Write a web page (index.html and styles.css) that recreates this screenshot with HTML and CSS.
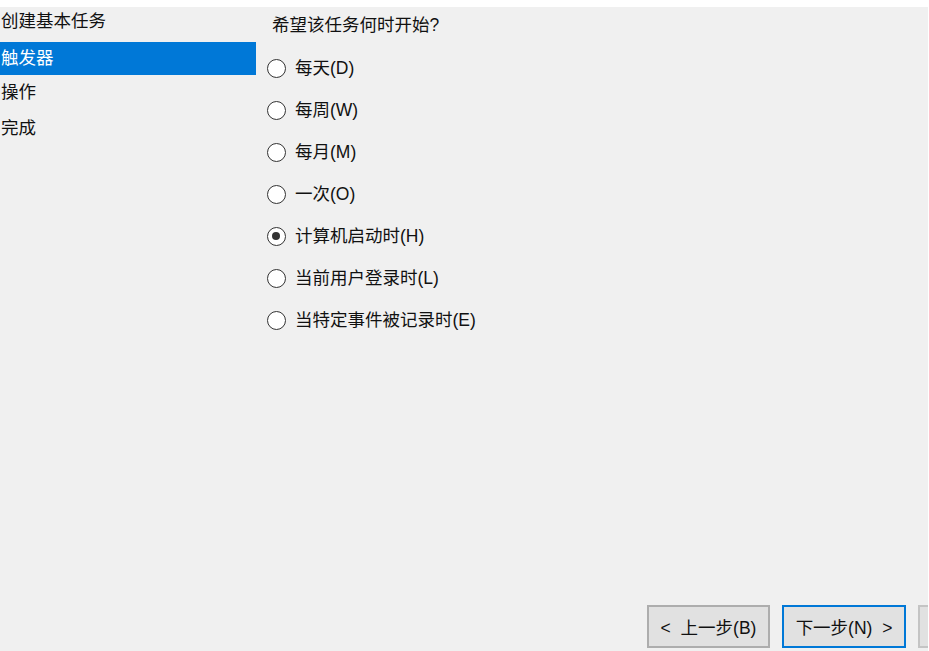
FILE: index.html
```html
<!DOCTYPE html>
<html lang="zh-CN">
<head>
<meta charset="utf-8">
<title>创建基本任务向导</title>
<link rel="stylesheet" href="styles.css">
</head>
<body>
<div class="window">
  <div class="top-strip"></div>
  <div class="main">
    <ul class="steps">
      <li class="step step-first">创建基本任务</li>
      <li class="step step-active">触发器</li>
      <li class="step">操作</li>
      <li class="step step-last">完成</li>
    </ul>
    <div class="content">
      <div class="question">希望该任务何时开始?</div>
      <div class="options">
        <label class="option"><span class="radio"></span><span class="label">每天(D)</span></label>
        <label class="option"><span class="radio"></span><span class="label">每周(W)</span></label>
        <label class="option"><span class="radio"></span><span class="label">每月(M)</span></label>
        <label class="option"><span class="radio"></span><span class="label">一次(O)</span></label>
        <label class="option"><span class="radio radio-checked"></span><span class="label">计算机启动时(H)</span></label>
        <label class="option"><span class="radio"></span><span class="label">当前用户登录时(L)</span></label>
        <label class="option"><span class="radio"></span><span class="label">当特定事件被记录时(E)</span></label>
      </div>
      <div class="footer">
        <button class="btn">&lt;&nbsp; 上一步(B)</button>
        <button class="btn btn-default">下一步(N) &nbsp;&gt;</button>
        <button class="btn btn-cut" aria-label="取消"></button>
      </div>
    </div>
  </div>
</div>
</body>
</html>
```
FILE: styles.css
```css
html, body {
  margin: 0;
  padding: 0;
  background: #ffffff;
}
body {
  width: 929px;
  height: 651px;
  overflow: hidden;
  font-family: "Liberation Sans", "Noto Sans CJK SC", "Microsoft YaHei", sans-serif;
  font-size: 17.5px;
  color: #111111;
}
.window {
  display: flex;
  flex-direction: column;
  height: 651px;
}
.top-strip {
  height: 7px;
  background: #ffffff;
  flex: none;
}
.main {
  flex: 1;
  display: flex;
  background: #f0f0f0;
  min-height: 0;
  margin-right: 1px;
}
.steps {
  list-style: none;
  margin: 0;
  padding: 0;
  width: 256px;
  flex: none;
}
.step {
  height: 34px;
  line-height: 34px;
  padding-left: 1px;
  white-space: nowrap;
}
.step-first {
  height: 35px;
  line-height: 28px;
}
.step-active {
  background: #0078d7;
  color: #ffffff;
  height: 33px;
  line-height: 32px;
}
.step-last {
  line-height: 38px;
}
.content {
  flex: 1;
  display: flex;
  flex-direction: column;
  padding-left: 10px;
  padding-top: 1px;
  min-width: 0;
}
.question {
  padding-left: 6px;
  height: 33px;
  line-height: 34px;
}
.options {
  display: flex;
  flex-direction: column;
  padding-top: 6px;
}
.option {
  display: flex;
  align-items: center;
  height: 42px;
}
.radio {
  width: 19px;
  height: 19px;
  box-sizing: border-box;
  border: 1.6px solid #333333;
  border-radius: 50%;
  background: #ffffff;
  flex: none;
  position: relative;
  margin-left: 1px;
}
.radio-checked::after {
  content: "";
  position: absolute;
  left: 4px;
  top: 4px;
  width: 8px;
  height: 8px;
  border-radius: 50%;
  background: #333333;
}
.label {
  margin-left: 9px;
  white-space: nowrap;
  line-height: 24px;
}
.footer {
  margin-top: auto;
  display: flex;
  gap: 12px;
  padding-left: 381px;
  padding-bottom: 3px;
  overflow: hidden;
}
.btn {
  flex: none;
  height: 43px;
  width: 123px;
  box-sizing: border-box;
  background: #e1e1e1;
  border: 2px solid #adadad;
  font-family: inherit;
  font-size: 17.5px;
  color: #111111;
  padding: 0;
  white-space: nowrap;
}
.btn-default {
  border-color: #0078d7;
  width: 124px;
}
.btn-cut {
  border-color: #c4c4c4;
}
```
